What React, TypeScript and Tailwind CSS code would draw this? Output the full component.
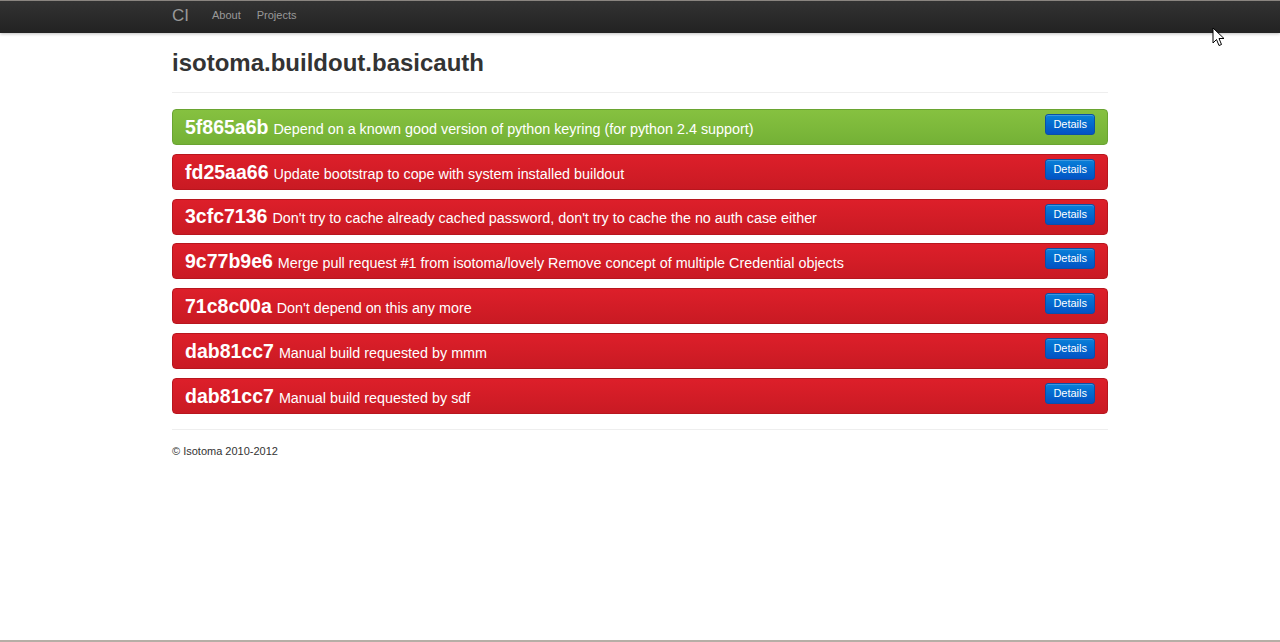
import React from "react";

// builds listed on the project page
const builds = [
  { hash: "5f865a6b", msg: "Depend on a known good version of python keyring (for python 2.4 support)", ok: true },
  { hash: "fd25aa66", msg: "Update bootstrap to cope with system installed buildout", ok: false },
  { hash: "3cfc7136", msg: "Don't try to cache already cached password, don't try to cache the no auth case either", ok: false },
  { hash: "9c77b9e6", msg: "Merge pull request #1 from isotoma/lovely Remove concept of multiple Credential objects", ok: false },
  { hash: "71c8c00a", msg: "Don't depend on this any more", ok: false },
  { hash: "dab81cc7", msg: "Manual build requested by mmm", ok: false },
  { hash: "dab81cc7", msg: "Manual build requested by sdf", ok: false },
];

const BuildRow = ({ hash, msg, ok }: { hash: string; msg: string; ok: boolean }) => (
  <div
    className={`flex items-center h-[36px] pl-[12px] pr-[12px] rounded-[4px] border text-white ${
      ok
        ? "bg-gradient-to-b from-[#86c140] to-[#74b136] border-[#6aa432]"
        : "bg-gradient-to-b from-[#dd1f2a] to-[#c91a23] border-[#b8161e]"
    }`}
  >
    <span className="text-[19.5px] font-bold leading-none mt-[1px]">{hash}</span>
    <span className="ml-[5px] text-[14.35px] leading-none mt-[4px]">{msg}</span>
    <button className="ml-auto self-start mt-[4px] h-[21px] px-[7px] rounded-[3px] border border-[#0a4fa8] bg-gradient-to-b from-[#0a80d8] to-[#0552c4] text-[11px] text-white leading-none shadow-[inset_0_1px_0_rgba(255,255,255,0.2)]">
      Details
    </button>
  </div>
);

const App = () => {
  return (
    <div className="relative h-[642px] bg-white flex flex-col font-['Liberation_Sans',Arial,sans-serif] text-[#333]">
      {/* navbar */}
      <header className="h-[33px] border-t border-[#8a8580] bg-gradient-to-b from-[#333] to-[#222] shadow-[0_1px_3px_rgba(0,0,0,0.25)]">
        <div className="w-[936px] mx-auto flex items-center h-full pb-[3px]">
          <span className="text-[17px] text-[#999] leading-none">CI</span>
          <nav className="flex gap-[16px] ml-[23px] text-[11px] text-[#999]">
            <a>About</a>
            <a>Projects</a>
          </nav>
        </div>
      </header>

      <main className="w-[936px] mx-auto flex-1">
        <h1 className="mt-[12px] text-[24px] font-bold leading-[36px] text-[#333]">isotoma.buildout.basicauth</h1>
        <hr className="mt-[11px] border-[#eee]" />
        <div className="mt-[16px] flex flex-col gap-[8.8px]">
          {builds.map((b, i) => (
            <BuildRow key={i} {...b} />
          ))}
        </div>
        <hr className="mt-[15px] border-[#eee]" />
        <footer className="mt-[13px] text-[11px] text-[#333]">© Isotoma 2010-2012</footer>
      </main>

      <div className="h-[2px] bg-[#b5aea6]" />

      {/* mouse pointer */}
      <svg className="absolute left-[1212px] top-[27px]" width="13" height="20" viewBox="0 0 13 20">
        <path d="M1 1 L1 16 L4.5 12.5 L7 18.5 L9.5 17.5 L7 11.5 L12 11.5 Z" fill="#fff" stroke="#000" strokeWidth="1" />
      </svg>
    </div>
  );
};

export default App;
